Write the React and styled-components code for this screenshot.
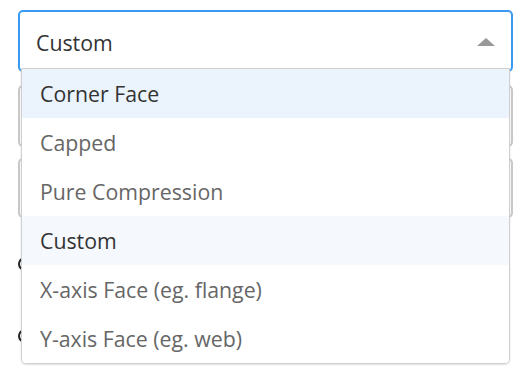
import React from "react";
import styled, { createGlobalStyle } from "styled-components";

const Global = createGlobalStyle`
  html, body { margin: 0; padding: 0; background: #fff; }
  body { font-family: "Open Sans", "Noto Sans", sans-serif; }
  * { box-sizing: border-box; }
`;

const Page = styled.div`
  width: 524px;
  height: 372px;
  padding: 10px 11px 0 18px;
  position: relative;
  overflow: hidden;
`;

const SelectWrap = styled.div`
  position: relative;
  z-index: 2;
`;

const Control = styled.div`
  height: 62px;
  border: 2px solid #3b99f0;
  border-radius: 5px;
  background: #fff;
  display: flex;
  align-items: center;
  padding: 2px 16px 0 16px;
  font-size: 21.3px;
  color: #333;
`;

const Value = styled.span`
  flex: 1;
`;

const Arrow = styled.span`
  width: 0;
  height: 0;
  border-left: 9px solid transparent;
  border-right: 9px solid transparent;
  border-bottom: 8px solid #999;
`;

const Menu = styled.ul`
  position: absolute;
  top: calc(100% - 4px);
  left: 3px;
  right: 3px;
  margin: 0;
  padding: 0;
  list-style: none;
  background: #fff;
  border: 1px solid #cfcfcf;
  border-radius: 0 0 5px 5px;
  box-shadow: 0 1px 2px rgba(0, 0, 0, 0.12);
  overflow: hidden;
`;

const Option = styled.li`
  height: 49px;
  display: flex;
  align-items: center;
  padding: 0 18px;
  font-size: 21.3px;
  color: ${(p) => (p.$focused || p.$selected ? "#333" : "#666")};
  background: ${(p) => (p.$focused ? "#ebf4fd" : p.$selected ? "#f5f9fe" : "#fff")};
`;

const Form = styled.div`
  display: flex;
  flex-direction: column;
  padding-top: 13px;
`;

const Input = styled.div`
  height: ${(p) => p.$h}px;
  margin-bottom: 11px;
  border: 2px solid #c8c8c8;
  border-radius: 5px;
  background: #fff;
`;

const Radio = styled.span`
  width: 14px;
  height: 14px;
  margin-top: ${(p) => p.$mt}px;
  border: 2px solid #222;
  border-radius: 50%;
`;

const options = [
  "Corner Face",
  "Capped",
  "Pure Compression",
  "Custom",
  "X-axis Face (eg. flange)",
  "Y-axis Face (eg. web)",
];

export default function App() {
  return (
    <Page>
      <Global />
      <SelectWrap>
        <Control>
          <Value>Custom</Value>
          <Arrow />
        </Control>
        <Menu>
          {options.map((o, i) => (
            <Option key={o} $focused={i === 0} $selected={o === "Custom"}>
              {o}
            </Option>
          ))}
        </Menu>
      </SelectWrap>
      <Form>
        <Input $h={62} />
        <Input $h={60} />
        <Radio $mt={28} />
        <Radio $mt={58} />
      </Form>
    </Page>
  );
}
